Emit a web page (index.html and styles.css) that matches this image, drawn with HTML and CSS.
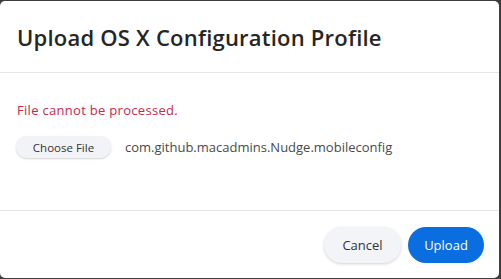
FILE: index.html
```html
<!DOCTYPE html>
<html lang="en">
  <head>
    <meta charset="UTF-8">
    <title>Upload OS X Configuration Profile</title>
    <link rel="stylesheet" href="styles.css">
  </head>
  <body>
    <div class="modal">
      <div class="modal-header">
        <h1 class="modal-title">Upload OS X Configuration Profile</h1>
      </div>

      <div class="modal-body">
        <p class="error">File cannot be processed.</p>
        <div class="file-row">
          <button class="btn-choose">Choose File</button>
          <span class="file-name">com.github.macadmins.Nudge.mobileconfig</span>
        </div>
      </div>

      <div class="modal-footer">
        <button class="btn btn-cancel">Cancel</button>
        <button class="btn btn-primary">Upload</button>
      </div>
    </div>
  </body>
</html>
```

FILE: styles.css
```css
* {
  box-sizing: border-box;
  font-family: 'Open Sans', 'Noto Sans', sans-serif;
}

body {
  margin: 0;
  padding: 1px 1px 1px 0;
  background: #3d3d3d;
  overflow: hidden;
}

.modal {
  width: 499px;
  height: 277px;
  background: #fff;
  border-radius: 5px;
  display: flex;
  flex-direction: column;
}

.modal-header {
  height: 72px;
  padding: 21px 17px 0;
  border-bottom: 1px solid #e6e6e6;
}

.modal-title {
  margin: 0;
  font-size: 22px;
  font-weight: 600;
  line-height: 30px;
  letter-spacing: 0.22px;
  color: #262626;
}

.modal-body {
  flex: 1;
  padding: 29px 17px 0 16px;
}

.error {
  margin: 0 0 18px 1px;
  font-size: 13px;
  line-height: 16px;
  letter-spacing: 0.3px;
  color: #c8294f;
}

.file-row {
  display: flex;
  align-items: center;
  gap: 14px;
}

.btn-choose {
  height: 22px;
  width: 95px;
  padding: 0;
  border: none;
  border-radius: 11px;
  background: #f2f3f7;
  box-shadow: 0 1px 2px rgba(0, 0, 0, 0.18);
  font-size: 11.5px;
  color: #333;
}

.file-name {
  font-size: 13px;
  color: #4a4a4a;
}

.modal-footer {
  height: 68px;
  border-top: 1px solid #e6e6e6;
  padding: 16px 15px 0 0;
  display: flex;
  justify-content: flex-end;
  gap: 7px;
}

.btn {
  height: 36px;
  border: none;
  border-radius: 18px;
  font-size: 13px;
}

.btn-cancel {
  width: 77px;
  background: #f3f4f8;
  color: #333;
  box-shadow: 0 1px 3px rgba(0, 0, 0, 0.18);
}

.btn-primary {
  width: 76px;
  background: #0b6ee0;
  color: #fff;
}
```
